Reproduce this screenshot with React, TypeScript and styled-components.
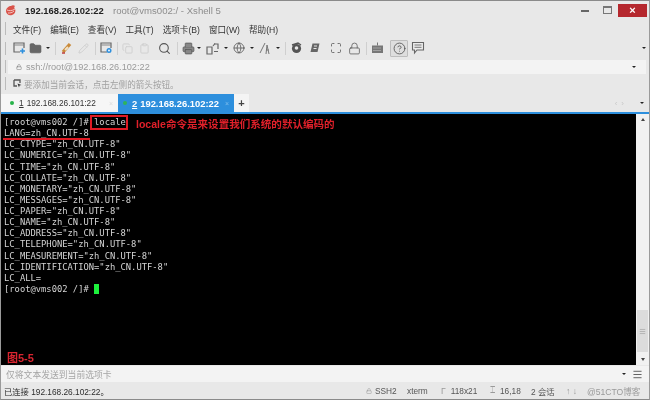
import React from "react";
import styled, { createGlobalStyle } from "styled-components";
import { Folder, Search, Printer, Globe, Lock, CircleHelp, Maximize, Pencil, Copy, Clipboard, Menu as MenuIcon } from "lucide-react";

const Global = createGlobalStyle`
  html, body { margin: 0; padding: 0; background: #e8e8e8; overflow: hidden; }
`;

const Win = styled.div`
  position: relative;
  width: 650px;
  height: 400px;
  box-sizing: border-box;
  border-top: 1px solid #8a8a8a;
  border-bottom: 1px solid #8a8a8a;
  border-left: 1px solid #9a9a9a;
  border-right: 1px solid #9a9a9a;
  background: #e8e8e8;
  display: flex;
  flex-direction: column;
  font-family: "Liberation Sans", "Noto Sans CJK SC", sans-serif;
  color: #333;
  filter: blur(0.3px);
  overflow: hidden;
`;

const TitleBar = styled.div`
  height: 18px;
  display: flex;
  align-items: center;
  padding-left: 4px;
  flex: none;
`;
const HostTitle = styled.span`
  font-weight: 700;
  font-size: 9.4px;
  color: #222;
  margin-left: 8px;
  width: 88px;
`;
const SubTitle = styled.span`
  font-size: 9.6px;
  color: #8d8d8d;
  flex: 1;
`;
const WinButton = styled.div<{ $w: number }>`
  width: ${(p) => p.$w}px;
  height: 14px;
  display: flex;
  align-items: center;
  justify-content: center;
`;
const CloseButton = styled.div`
  width: 29px;
  height: 13px;
  margin: 0 2px 0 0;
  background: #b5282e;
  color: #fff;
  font-size: 11px;
  font-weight: 700;
  display: flex;
  align-items: center;
  justify-content: center;
`;

const MenuBar = styled.div`
  height: 19px;
  display: flex;
  align-items: center;
  padding-left: 4px;
  flex: none;
`;
const Grip = styled.div<{ $gap?: number }>`
  width: 1px;
  height: 13px;
  background: #bbb;
  margin-right: ${(p) => p.$gap ?? 7}px;
  flex: none;
`;
const MenuItem = styled.span`
  font-size: 8.6px;
  color: #333;
  margin-right: 9px;
  white-space: nowrap;
`;

const ToolBar = styled.div`
  height: 20px;
  display: flex;
  align-items: center;
  padding-left: 4px;
  flex: none;
  color: #555;
`;
const Slot = styled.div<{ $w: number; $faded?: boolean; $active?: boolean }>`
  width: ${(p) => p.$w}px;
  height: 17px;
  box-sizing: border-box;
  display: flex;
  align-items: center;
  justify-content: center;
  flex: none;
  color: ${(p) => (p.$faded ? "#cfcfcf" : "#555")};
  ${(p) => (p.$active ? "border: 1px solid #bdbdbd; background: #dedede; border-radius: 1px;" : "")}
`;
const Sep = styled.div`
  width: 1px;
  height: 13px;
  background: #cfcfcf;
  margin: 0 3px;
  flex: none;
`;
const Drop = styled.div`
  width: 0;
  height: 0;
  border-left: 2px solid transparent;
  border-right: 2px solid transparent;
  border-top: 2px solid #222;
  margin: 0 2px;
  flex: none;
`;
const Spring = styled.div`
  flex: 1;
`;

const AddressRow = styled.div`
  height: 15px;
  margin-top: 1px;
  display: flex;
  align-items: center;
  padding-left: 4px;
  flex: none;
`;
const AddressField = styled.div`
  flex: 1;
  height: 14px;
  margin-left: -5px;
  margin-right: 3px;
  padding: 0 8px 0 8px;
  background: #f3f3f3;
  display: flex;
  align-items: center;
  font-size: 9.2px;
  color: #9a9a9a;
  gap: 4px;
`;
const HintRow = styled.div`
  height: 19px;
  display: flex;
  align-items: center;
  padding-left: 4px;
  font-size: 8.6px;
  color: #a0a0a0;
  flex: none;
`;
const HintIcon = styled.span`
  display: flex;
  margin-right: 2px;
`;

const TabStrip = styled.div`
  height: 18px;
  margin-top: 1px;
  display: flex;
  align-items: stretch;
  flex: none;
`;
const Tab = styled.div<{ $active?: boolean }>`
  width: ${(p) => (p.$active ? 116 : 117)}px;
  box-sizing: border-box;
  display: flex;
  align-items: center;
  padding-left: ${(p) => (p.$active ? 5 : 9)}px;
  background: ${(p) => (p.$active ? "#2d8fdd" : "#f6f6f6")};
  color: ${(p) => (p.$active ? "#fff" : "#333")};
  font-size: ${(p) => (p.$active ? 9.4 : 8.3)}px;
  font-weight: ${(p) => (p.$active ? 700 : 400)};
`;
const Dot = styled.span<{ $color: string }>`
  width: 4px;
  height: 4px;
  border-radius: 50%;
  background: ${(p) => p.$color};
  margin-right: 5px;
  flex: none;
`;
const TabNo = styled.span`
  text-decoration: underline;
  margin-right: 3px;
`;
const TabClose = styled.span<{ $active?: boolean }>`
  margin-left: auto;
  margin-right: 5px;
  font-size: 7px;
  color: ${(p) => (p.$active ? "#7fbdec" : "#ddd")};
  font-weight: 400;
`;
const AddTab = styled.div`
  width: 15px;
  background: #f4f4f4;
  font-size: 11px;
  font-weight: 700;
  color: #444;
  display: flex;
  align-items: center;
  justify-content: center;
`;
const TabNav = styled.div`
  display: flex;
  align-items: center;
  gap: 4px;
  padding-right: 3px;
  font-size: 8px;
  color: #c8c8c8;
`;
const BlueLine = styled.div`
  height: 2px;
  background: #2d8fdd;
  flex: none;
`;

const TermArea = styled.div`
  flex: 1;
  min-height: 0;
  display: flex;
  background: #000;
  position: relative;
`;
const Screen = styled.pre`
  flex: 1;
  margin: 0;
  padding: 3px 0 0 3px;
  font-family: "DejaVu Sans Mono", monospace;
  font-size: 8.8px;
  line-height: 11.12px;
  color: #d4d4d4;
`;
const Cursor = styled.span`
  display: inline-block;
  width: 5px;
  height: 10px;
  vertical-align: -2px;
  background: #1df03c;
`;
const ScrollBar = styled.div`
  width: 13px;
  background: #f1f1f1;
  display: flex;
  flex-direction: column;
  align-items: center;
  flex: none;
`;
const Arrow = styled.div<{ $down?: boolean }>`
  width: 0;
  height: 0;
  margin: 4px 0;
  border-left: 2.5px solid transparent;
  border-right: 2.5px solid transparent;
  ${(p) => (p.$down ? "border-top: 3px solid #444;" : "border-bottom: 3px solid #444;")}
`;
const Track = styled.div`
  flex: 1;
  width: 100%;
  display: flex;
  flex-direction: column;
  justify-content: flex-end;
`;
const Thumb = styled.div`
  height: 42px;
  margin: 0 1px 2px;
  background: #dcdcdc;
  display: flex;
  align-items: center;
  justify-content: center;
  color: #999;
`;

const RedBox = styled.div`
  position: absolute;
  left: 89px;
  top: 1px;
  width: 34px;
  height: 11px;
  border: 2px solid #e01b24;
`;
const RedNote = styled.div`
  position: absolute;
  left: 135px;
  top: 3px;
  font-size: 10.56px;
  line-height: 14px;
  font-weight: 700;
  white-space: nowrap;
  color: #e0202a;
`;
const RedRule = styled.div`
  position: absolute;
  left: 2px;
  top: 24px;
  width: 87px;
  height: 2px;
  background: #e01b24;
`;
const FigLabel = styled.div`
  position: absolute;
  left: 6px;
  bottom: 0;
  font-size: 11px;
  line-height: 14px;
  font-weight: 700;
  color: #d92530;
`;

const InputRow = styled.div`
  height: 16px;
  margin-top: 1px;
  background: #f3f3f3;
  display: flex;
  align-items: center;
  padding: 0 3px 0 5px;
  font-size: 8.8px;
  color: #a4a4a4;
  flex: none;
`;
const StatusBar = styled.div`
  height: 17px;
  display: flex;
  align-items: center;
  padding-left: 3px;
  font-size: 8.3px;
  color: #2c2c2c;
  flex: none;
  white-space: nowrap;
`;
const StatusCell = styled.span<{ $w: number; $gap?: number }>`
  width: ${(p) => p.$w}px;
  display: flex;
  align-items: center;
  gap: ${(p) => p.$gap ?? 2}px;
  flex: none;
  color: #555;
`;
const LeftStatus = styled.span`
  width: 362px;
  flex: none;
`;
const Mark = styled.span`
  color: #999;
  font-size: 8.6px;
`;

const Logo = () => (
  <svg width="12" height="12" viewBox="0 0 12 12">
    <path d="M1 7c0-3 3-5 5-5 1-1 3-1 4 0-1 1-1 2 0 3 1 2 0 5-3 6-3 1-6-1-6-4z" fill="#d9534a" />
    <path d="M2 6c2 1 5 1 8-1M3 9c2 0 4 0 6-2" stroke="#f5c6c0" strokeWidth="1" fill="none" />
  </svg>
);
const NewIcon = () => (
  <svg width="13" height="12" viewBox="0 0 13 12" fill="none">
    <path d="M7 10H1V1h10v5" stroke="#666" strokeWidth="1.2" />
    <path d="M1 3h10" stroke="#888" />
    <path d="M9.5 6.5v5M7 9h5" stroke="#2d8fdd" strokeWidth="1.6" />
  </svg>
);
const BrushIcon = () => (
  <svg width="14" height="13" viewBox="0 0 14 13" fill="none">
    <path d="M3 10l7-8" stroke="#c98a3a" strokeWidth="3.4" />
    <path d="M5 8L8 5" stroke="#f2e2c4" strokeWidth="2" />
    <path d="M2 11h3" stroke="#b33" strokeWidth="1.4" />
  </svg>
);
const PropIcon = () => (
  <svg width="13" height="12" viewBox="0 0 13 12" fill="none">
    <path d="M7 10H1V1h10v5" stroke="#666" strokeWidth="1.2" />
    <path d="M1 3h10" stroke="#888" />
    <circle cx="9" cy="8.5" r="2.5" fill="#2d8fdd" />
    <circle cx="9" cy="8.5" r="0.9" fill="#fff" />
  </svg>
);
const TransferIcon = () => (
  <svg width="13" height="13" viewBox="0 0 13 13" fill="none">
    <path d="M1 5h5v7H1zM8 2h4v5" stroke="#666" strokeWidth="1.2" />
    <path d="M8 9.5h4M7 4l2-2.5" stroke="#666" strokeWidth="1.2" />
  </svg>
);
const FontIcon = () => (
  <svg width="12" height="13" viewBox="0 0 12 13" fill="none">
    <path d="M1 11L6 1M7 12l1-9 2 9M7 8h3" stroke="#777" strokeWidth="1" />
  </svg>
);
const SwirlIcon = () => (
  <svg width="13" height="12" viewBox="0 0 13 12" fill="none">
    <circle cx="6.5" cy="6.5" r="4.6" fill="#555" />
    <circle cx="6.5" cy="6" r="1.8" fill="#e8e8e8" />
    <path d="M2 3l6-2 3 2" stroke="#555" strokeWidth="1.4" />
  </svg>
);
const ScriptIcon = () => (
  <svg width="12" height="12" viewBox="0 0 12 12" fill="none">
    <path d="M3.5 1.5h7L8.5 10h-7z" fill="#666" />
    <path d="M5 4h3M4.5 6.5h3" stroke="#e8e8e8" />
  </svg>
);
const KeysIcon = () => (
  <svg width="13" height="12" viewBox="0 0 13 12" fill="none">
    <rect x="1" y="3.5" width="11" height="7.5" fill="#777" />
    <path d="M2.5 6h8M2.5 8.5h8" stroke="#ccc" strokeDasharray="1 1" />
    <path d="M6.5 0.5v3" stroke="#777" />
  </svg>
);
const ChatIcon = () => (
  <svg width="14" height="14" viewBox="0 0 14 14" fill="none">
    <path d="M1.5 1.5h11v7.5H6l-2.5 3V9h-2z" stroke="#666" strokeWidth="1.1" fill="#ececec" />
    <path d="M3.5 4h7M3.5 6.3h7" stroke="#777" />
  </svg>
);
const HintGlyph = () => (
  <svg width="9" height="9" viewBox="0 0 9 9" fill="none">
    <path d="M1 1h6v3M1 1v6h3" stroke="#555" strokeWidth="1.3" />
    <path d="M4.5 4.5l4 1.5-2 .5-.5 2z" fill="#333" />
  </svg>
);

const lines = [
  "[root@vms002 /]# locale",
  "LANG=zh_CN.UTF-8",
  'LC_CTYPE="zh_CN.UTF-8"',
  'LC_NUMERIC="zh_CN.UTF-8"',
  'LC_TIME="zh_CN.UTF-8"',
  'LC_COLLATE="zh_CN.UTF-8"',
  'LC_MONETARY="zh_CN.UTF-8"',
  'LC_MESSAGES="zh_CN.UTF-8"',
  'LC_PAPER="zh_CN.UTF-8"',
  'LC_NAME="zh_CN.UTF-8"',
  'LC_ADDRESS="zh_CN.UTF-8"',
  'LC_TELEPHONE="zh_CN.UTF-8"',
  'LC_MEASUREMENT="zh_CN.UTF-8"',
  'LC_IDENTIFICATION="zh_CN.UTF-8"',
  "LC_ALL=",
  "[root@vms002 /]# ",
];

export default function App() {
  return (
    <Win>
      <Global />
      <TitleBar>
        <Logo />
        <HostTitle>192.168.26.102:22</HostTitle>
        <SubTitle>root@vms002:/ - Xshell 5</SubTitle>
        <WinButton $w={22}>
          <svg width="8" height="3"><rect width="8" height="2" y="1" fill="#666" /></svg>
        </WinButton>
        <WinButton $w={22}>
          <svg width="9" height="8" fill="none"><rect x="0.5" y="0.5" width="8" height="7" stroke="#777" /><rect width="9" height="2" fill="#777" /></svg>
        </WinButton>
        <CloseButton>×</CloseButton>
      </TitleBar>
      <MenuBar>
        <Grip />
        {["文件(F)", "编辑(E)", "查看(V)", "工具(T)", "选项卡(B)", "窗口(W)", "帮助(H)"].map((m) => (
          <MenuItem key={m}>{m}</MenuItem>
        ))}
      </MenuBar>
      <ToolBar>
        <Grip $gap={6} />
        <Slot $w={14}><NewIcon /></Slot>
        <Slot $w={18}><Folder size={13} fill="#666" strokeWidth={1.2} /></Slot>
        <Drop />
        <Sep />
        <Slot $w={15}><BrushIcon /></Slot>
        <Slot $w={18} $faded><Pencil size={11} /></Slot>
        <Sep />
        <Slot $w={15}><PropIcon /></Slot>
        <Sep />
        <Slot $w={13} $faded><Copy size={11} /></Slot>
        <Slot $w={20} $faded><Clipboard size={11} /></Slot>
        <Slot $w={20}><Search size={13} strokeWidth={2} /></Slot>
        <Sep />
        <Slot $w={14}><Printer size={13} fill="#888" strokeWidth={1.4} /></Slot>
        <Drop />
        <Slot $w={19}><TransferIcon /></Slot>
        <Drop />
        <Slot $w={18}><Globe size={12} strokeWidth={1.6} /></Slot>
        <Drop />
        <Slot $w={18}><FontIcon /></Slot>
        <Drop />
        <Sep />
        <Slot $w={14}><SwirlIcon /></Slot>
        <Slot $w={24}><ScriptIcon /></Slot>
        <Slot $w={18}><Maximize size={12} strokeWidth={1.6} /></Slot>
        <Slot $w={18}><Lock size={13} strokeWidth={1.4} /></Slot>
        <Sep />
        <Slot $w={14}><KeysIcon /></Slot>
        <Slot $w={6} />
        <Slot $w={18} $active><CircleHelp size={13} strokeWidth={1.6} /></Slot>
        <Slot $w={19}><ChatIcon /></Slot>
        <Spring />
        <Drop />
        <Slot $w={1} />
      </ToolBar>
      <AddressRow>
        <Grip />
        <AddressField>
          <Lock size={6} strokeWidth={2} color="#777" />
          ssh://root@192.168.26.102:22
          <Spring />
          <Drop />
        </AddressField>
      </AddressRow>
      <HintRow>
        <Grip />
        <HintIcon><HintGlyph /></HintIcon>
        要添加当前会话，点击左侧的箭头按钮。
      </HintRow>
      <TabStrip>
        <Tab><Dot $color="#27b34a" /><TabNo>1</TabNo>192.168.26.101:22<TabClose>×</TabClose></Tab>
        <Tab $active><Dot $color="#2fb45a" /><TabNo>2</TabNo>192.168.26.102:22<TabClose $active>×</TabClose></Tab>
        <AddTab>+</AddTab>
        <Spring />
        <TabNav><span>‹</span><span>›</span><Slot $w={6} /><Drop /></TabNav>
      </TabStrip>
      <BlueLine />
      <TermArea>
        <Screen>
          {lines.map((l, i) => (
            <React.Fragment key={i}>
              {l}
              {i === lines.length - 1 && <Cursor />}
              {"\n"}
            </React.Fragment>
          ))}
        </Screen>
        <ScrollBar>
          <Arrow />
          <Track>
            <Thumb><MenuIcon size={7} strokeWidth={2} /></Thumb>
          </Track>
          <Arrow $down />
        </ScrollBar>
        <RedBox />
        <RedNote>locale命令是来设置我们系统的默认编码的</RedNote>
        <RedRule />
        <FigLabel>图5-5</FigLabel>
      </TermArea>
      <InputRow>
        仅将文本发送到当前选项卡
        <Spring />
        <Drop />
        <Slot $w={18}><MenuIcon size={11} strokeWidth={2} /></Slot>
      </InputRow>
      <StatusBar>
        <LeftStatus>已连接 192.168.26.102:22。</LeftStatus>
        <StatusCell $w={41} $gap={3}><Lock size={6} color="#999" />SSH2</StatusCell>
        <StatusCell $w={34}>xterm</StatusCell>
        <StatusCell $w={49} $gap={5}><Mark>Γ</Mark>118x21</StatusCell>
        <StatusCell $w={41} $gap={5}><Mark>⌶</Mark>16,18</StatusCell>
        <StatusCell $w={35}>2 会话</StatusCell>
        <StatusCell $w={21}><Mark>↑ ↓</Mark></StatusCell>
        <Mark>@51CTO博客</Mark>
      </StatusBar>
    </Win>
  );
}
